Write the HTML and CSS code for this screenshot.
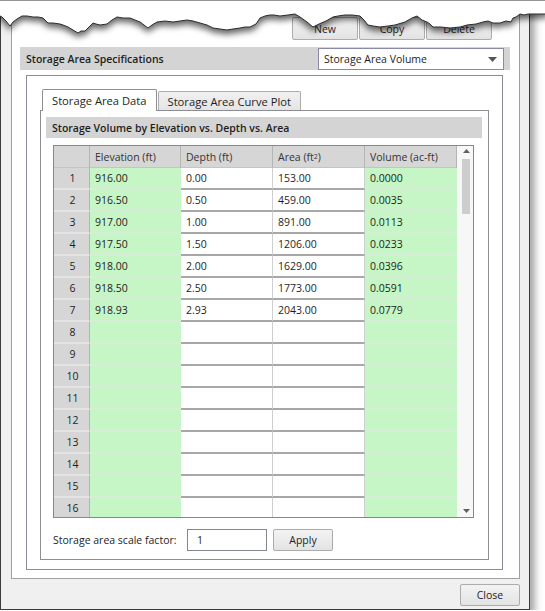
FILE: index.html
```html
<!DOCTYPE html>
<html lang="en">
<head>
    <meta charset="UTF-8">
    <meta name="viewport" content="width=device-width, initial-scale=1.0">
    <title>Storage Area</title>
    <link rel="stylesheet" href="styles.css">
</head>
<body>
    <div class="window">
        <div class="panel">
            <div class="toolbar">
                <button class="btn tool">New</button>
                <button class="btn tool">Copy</button>
                <button class="btn tool">Delete</button>
            </div>
            <div class="spec-bar">
                <span class="bar-title">Storage Area Specifications</span>
                <div class="select">
                    <span>Storage Area Volume</span>
                    <svg class="select-arrow" width="9" height="5" viewBox="0 0 9 5"><path d="M0 0 H9 L4.5 5 Z" fill="#555"/></svg>
                </div>
            </div>
            <div class="group">
                <div class="tabs">
                    <div class="tab active">Storage Area Data</div>
                    <div class="tab">Storage Area Curve Plot</div>
                </div>
                <div class="tab-panel">
                    <div class="sub-bar">Storage Volume by Elevation vs. Depth vs. Area</div>
                    <div class="grid-wrap">
                        <div class="grid">
                            <div class="c hd"></div>
                            <div class="c hd">Elevation (ft)</div>
                            <div class="c hd">Depth (ft)</div>
                            <div class="c hd">Area (ft<sup>2</sup>)</div>
                            <div class="c hd">Volume (ac-ft)</div>

                            <div class="c rh">1</div><div class="c g">916.00</div><div class="c w">0.00</div><div class="c w">153.00</div><div class="c g">0.0000</div>
                            <div class="c rh">2</div><div class="c g">916.50</div><div class="c w">0.50</div><div class="c w">459.00</div><div class="c g">0.0035</div>
                            <div class="c rh">3</div><div class="c g">917.00</div><div class="c w">1.00</div><div class="c w">891.00</div><div class="c g">0.0113</div>
                            <div class="c rh">4</div><div class="c g">917.50</div><div class="c w">1.50</div><div class="c w">1206.00</div><div class="c g">0.0233</div>
                            <div class="c rh">5</div><div class="c g">918.00</div><div class="c w">2.00</div><div class="c w">1629.00</div><div class="c g">0.0396</div>
                            <div class="c rh">6</div><div class="c g">918.50</div><div class="c w">2.50</div><div class="c w">1773.00</div><div class="c g">0.0591</div>
                            <div class="c rh">7</div><div class="c g">918.93</div><div class="c w">2.93</div><div class="c w">2043.00</div><div class="c g">0.0779</div>
                            <div class="c rh">8</div><div class="c g"></div><div class="c w"></div><div class="c w"></div><div class="c g"></div>
                            <div class="c rh">9</div><div class="c g"></div><div class="c w"></div><div class="c w"></div><div class="c g"></div>
                            <div class="c rh">10</div><div class="c g"></div><div class="c w"></div><div class="c w"></div><div class="c g"></div>
                            <div class="c rh">11</div><div class="c g"></div><div class="c w"></div><div class="c w"></div><div class="c g"></div>
                            <div class="c rh">12</div><div class="c g"></div><div class="c w"></div><div class="c w"></div><div class="c g"></div>
                            <div class="c rh">13</div><div class="c g"></div><div class="c w"></div><div class="c w"></div><div class="c g"></div>
                            <div class="c rh">14</div><div class="c g"></div><div class="c w"></div><div class="c w"></div><div class="c g"></div>
                            <div class="c rh">15</div><div class="c g"></div><div class="c w"></div><div class="c w"></div><div class="c g"></div>
                            <div class="c rh">16</div><div class="c g"></div><div class="c w"></div><div class="c w"></div><div class="c g"></div>
                        </div>
                        <div class="scrollbar">
                            <svg class="sb-arrow" width="7" height="4" viewBox="0 0 7 4"><path d="M0 4 L3.5 0 L7 4 Z" fill="#606060"/></svg>
                            <div class="sb-track"><div class="sb-thumb"></div></div>
                            <svg class="sb-arrow" width="7" height="4" viewBox="0 0 7 4"><path d="M0 0 H7 L3.5 4 Z" fill="#606060"/></svg>
                        </div>
                    </div>
                    <div class="scale-row">
                        <label class="scale-label">Storage area scale factor:</label>
                        <div class="text-input">1</div>
                        <button class="btn apply">Apply</button>
                    </div>
                </div>
            </div>
        </div>
        <div class="footer">
            <button class="btn close">Close</button>
        </div>
    </div>

    <svg class="torn" width="545" height="48" viewBox="0 0 545 48">
        <defs>
            <filter id="edge-shadow" x="-5%" y="-20%" width="110%" height="160%">
                <feDropShadow dx="0" dy="4" stdDeviation="3" flood-color="#000" flood-opacity="0.6"/>
            </filter>
        </defs>
        <path filter="url(#edge-shadow)" fill="#fff" stroke="#2a2a2a" stroke-width="1"
              d="M-2 0 H547 V14 H528 L524 15 L520 14 L516 17 L513 18 L511 22 L506 21 L500 23 L493 23 L488 21 L483 22 L476 24 L467 25 L460 27 L450 28 L441 27 L433 27 L430 24 L427 22 L422 20 L417 16 L412 18 L405 22 L395 25 L388 26 L380 27 L373 26 L368 25 L364 20 L360 16 L352 15 L345 15 L338 16 L333 17 L326 21 L319 24 L313 27 L307 22 L300 17 L295 14 L288 15 L280 16 L274 15 L270 15 L265 16 L260 18 L256 24 L250 27 L245 27 L240 28 L233 29 L227 30 L220 29 L213 28 L207 25 L200 23 L193 21 L187 20 L180 21 L173 22 L165 21 L157 22 L152 25 L148 28 L144 25 L140 22 L135 20 L130 18 L123 18 L117 17 L112 20 L107 24 L100 25 L96 24 L93 23 L89 27 L85 31 L81 31 L78 33 L73 30 L68 27 L63 25 L60 24 L53 23 L48 23 L45 20 L43 18 L38 17 L33 17 L27 16 L22 16 L17 19 L13 22 L10 26 L6 21 L2 17 L-2 15 Z"/>
    </svg>
</body>
</html>
```

FILE: styles.css
```css
*{
    box-sizing: border-box;
}
body{
    margin: 0;
    background: #fff;
    font-family: "Open Sans", "Noto Sans", sans-serif;
    font-size: 10.5px;
    color: #1e1e1e;
}
.window{
    width: 530px;
    height: 610px;
    background: #f0f0f0;
    border: 1px solid #3c3c3c;
    box-shadow: 5px 5px 7px rgba(0, 0, 0, 0.35);
    display: flex;
    flex-direction: column;
    padding: 0 9px 0 10px;
}

/* main white panel */
.panel{
    background: #fff;
    border: 1px solid #a0a0a0;
    border-top: 0;
    height: 578px;
    padding: 16px 9px 0 8px;
    display: flex;
    flex-direction: column;
}
.toolbar{
    display: flex;
    justify-content: flex-end;
    gap: 1px;
    margin-right: 18px;
    height: 23px;
    margin-bottom: 7px;
}
.btn{
    font-family: "Open Sans", "Noto Sans", sans-serif;
    font-size: 10.5px;
    color: #1e1e1e;
    border: 1px solid #acacac;
    border-radius: 2px;
    background: linear-gradient(#f3f3f3, #e3e3e3);
    padding: 0;
    cursor: pointer;
}
.tool{
    width: 66px;
    height: 23px;
}
.spec-bar{
    height: 23px;
    background: #d4d4d4;
    display: flex;
    align-items: center;
    justify-content: space-between;
    padding: 1px 6px 1px 6px;
}
.bar-title{
    font-weight: 600;
}
.select{
    width: 186px;
    height: 22px;
    margin-top: 1px;
    background: #fff;
    border: 1px solid #8a8aa6;
    display: flex;
    align-items: center;
    justify-content: space-between;
    padding: 0 6px 0 5px;
}

/* inner group */
.group{
    margin: 5px 7px 0 6px;
    height: 495px;
    border: 1px solid #8a8c9c;
    padding: 13px 13px 9px 13px;
    display: flex;
    flex-direction: column;
}
.tabs{
    display: flex;
    align-items: flex-end;
    height: 21px;
    padding-left: 2px;
}
.tab{
    height: 19px;
    padding: 0 9px;
    display: flex;
    align-items: center;
    font-size: 11.2px;
    border: 1px solid #acacac;
    border-bottom: 0;
    background: linear-gradient(#f0f0f0, #e5e5e5);
    border-radius: 2px 2px 0 0;
}
.tab.active{
    height: 22px;
    margin-bottom: -1px;
    background: #fff;
    border-color: #8c8e94;
    position: relative;
    z-index: 1;
    margin-right: 1px;
}
.tab-panel{
    flex: 1;
    border: 1px solid #8c8e94;
    padding: 6px 6px 8px 5px;
    display: flex;
    flex-direction: column;
}
.sub-bar{
    height: 21px;
    background: #d4d4d4;
    font-weight: 600;
    padding-left: 6px;
    display: flex;
    align-items: center;
}

/* data grid */
.grid-wrap{
    margin: 7px 0 0 7px;
    width: 421px;
    height: 373px;
    border: 1px solid #828790;
    display: flex;
    overflow: hidden;
}
.grid{
    display: grid;
    grid-template-columns: 36px 91px 92px 92px 92px;
    grid-auto-rows: 22px;
    align-content: start;
    flex-shrink: 0;
}
.c{
    display: flex;
    align-items: center;
    padding-left: 5px;
    white-space: nowrap;
}
.hd{
    background: #d6d6d6;
    border-right: 1px solid #b4b4b4;
    border-bottom: 1px solid #c4c4c4;
    color: #333;
}
.hd sup{
    font-size: 7px;
    line-height: 0;
}
.rh{
    background: #d6d6d6;
    border-right: 1px solid #b4b4b4;
    border-bottom: 2px solid #e4e4e4;
    justify-content: center;
    padding-left: 2px;
}
.g{
    background: #c6f5c6;
    border-bottom: 2px solid #d6ecd6;
}
.w{
    background: #fff;
    border-right: 1px solid #cfcfcf;
    border-bottom: 2px solid #a8a8a8;
}
.scrollbar{
    width: 16px;
    flex-shrink: 0;
    background: #f7f7f7;
    display: flex;
    flex-direction: column;
    align-items: center;
    padding: 3px 0 4px;
}
.sb-arrow{
    display: block;
    margin-left: 2px;
}
.sb-track{
    flex: 1;
    width: 100%;
    padding: 6px 0 0 5px;
}
.sb-thumb{
    width: 8px;
    height: 55px;
    background: #cdcdcd;
}

/* scale factor row */
.scale-row{
    display: flex;
    align-items: center;
    margin: 11px 0 0 7px;
    height: 22px;
}
.scale-label{
    width: 134px;
}
.text-input{
    width: 80px;
    height: 22px;
    border: 1px solid #828790;
    padding-left: 9px;
    display: flex;
    align-items: center;
}
.apply{
    width: 60px;
    height: 22px;
    margin-left: 6px;
}

.footer{
    display: flex;
    justify-content: flex-end;
    padding-top: 5px;
}
.close{
    width: 60px;
    height: 22px;
}

/* torn top edge of the screenshot */
.torn{
    position: absolute;
    top: 0;
    left: 0;
}
```
